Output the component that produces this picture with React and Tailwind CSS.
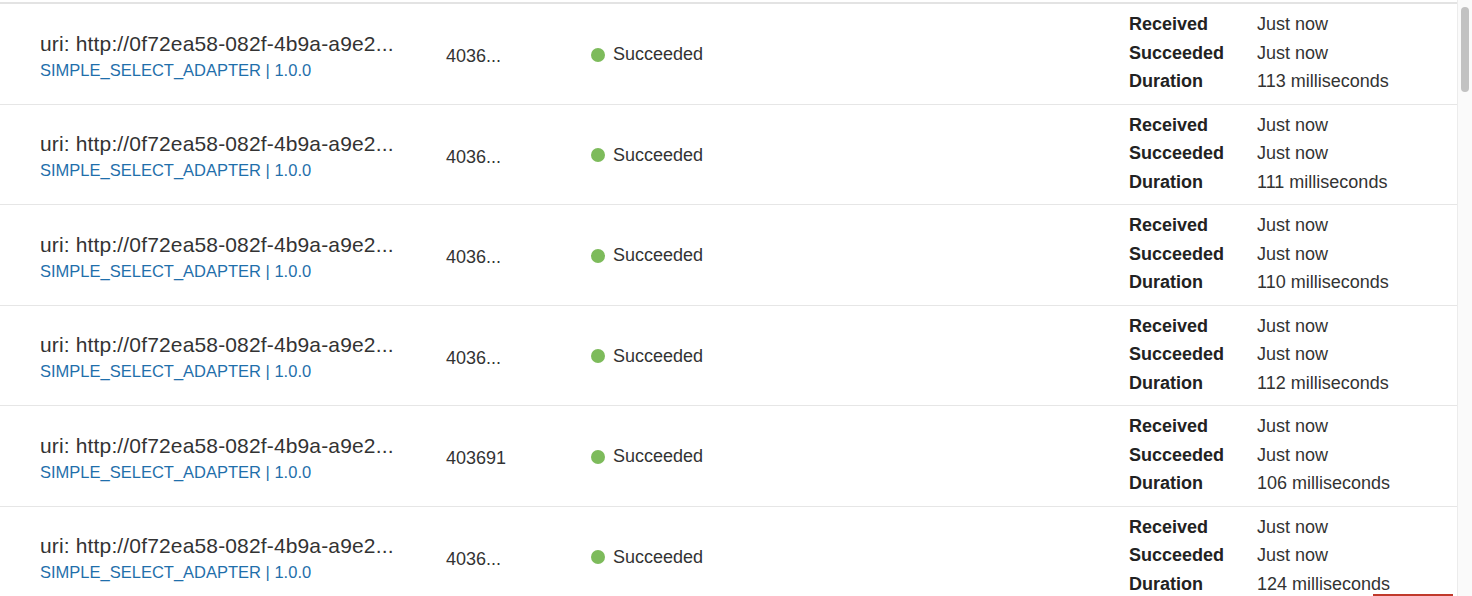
import React from "react";

const rows = [
  { id: "4036...", dur: "113 milliseconds" },
  { id: "4036...", dur: "111 milliseconds" },
  { id: "4036...", dur: "110 milliseconds" },
  { id: "4036...", dur: "112 milliseconds" },
  { id: "403691", dur: "106 milliseconds" },
  { id: "4036...", dur: "124 milliseconds" },
];

function Row({ r, first }) {
  return (
    <div
      className={
        "flex items-center shrink-0 border-b border-[#e6e6e6] " +
        (first ? "h-[102.5px] border-t-2 border-t-[#e3e3e3]" : "h-[100.5px]")
      }
    >
      <div className="w-[446px] pl-[40px] flex flex-col pt-[6px]">
        <div className="text-[21px] tracking-[0.15px] leading-[26px] text-[#333] whitespace-nowrap">
          uri: http://0f72ea58-082f-4b9a-a9e2...
        </div>
        <div className="text-[16.5px] leading-[26px] text-[#1f6fab] whitespace-nowrap">
          SIMPLE_SELECT_ADAPTER | 1.0.0
        </div>
      </div>
      <div className="w-[145px] text-[18px] text-[#333] pt-[6px]">{r.id}</div>
      <div className="flex-1 flex items-center gap-[8px] text-[18px] text-[#333] pt-[2px]">
        <span className="w-[14px] h-[14px] rounded-full bg-[#7dbb5b]" />
        <span>Succeeded</span>
      </div>
      <div className="w-[328px] flex flex-col text-[18px] leading-[28.5px] pb-[2px]">
        {[
          ["Received", "Just now"],
          ["Succeeded", "Just now"],
          ["Duration", r.dur],
        ].map(([k, v]) => (
          <div key={k} className="flex">
            <span className="w-[128px] font-bold text-[#222]">{k}</span>
            <span className="text-[#333]">{v}</span>
          </div>
        ))}
      </div>
    </div>
  );
}

export default function App() {
  return (
    <div
      className="relative w-[1472px] h-[596px] overflow-hidden bg-white flex"
      style={{ fontFamily: '"Liberation Sans", Arial, sans-serif' }}
    >
      <div className="flex-1 flex flex-col pt-[2px]">
        {rows.map((r, i) => (
          <Row key={i} r={r} first={i === 0} />
        ))}
      </div>
      <div className="w-[15px] border-l border-[#ececec] bg-[#fafafa] pt-[7px] px-[3px]">
        <div className="h-[85px] w-[8px] rounded-full bg-[#c2c2c2]" />
      </div>
      <div className="absolute bottom-0 right-[19px] w-[80px] h-[2px] bg-[#c0392b]" />
    </div>
  );
}
